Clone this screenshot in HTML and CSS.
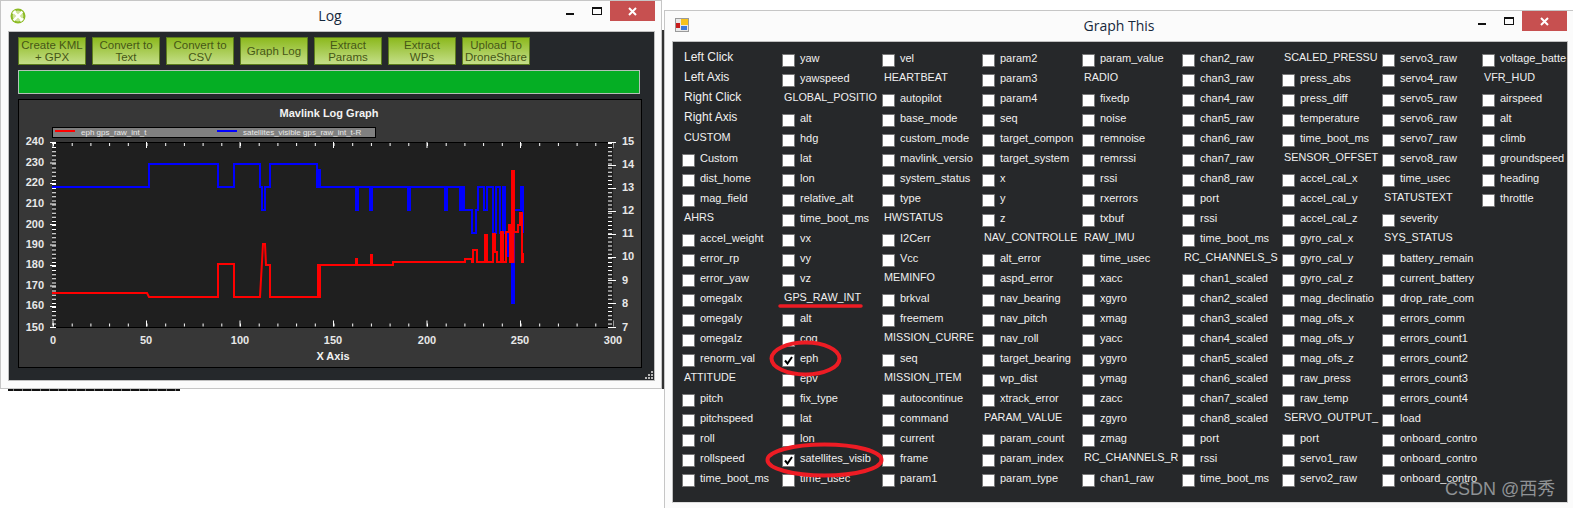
FILE: index.html
```html
<!DOCTYPE html>
<html lang="en">
<head>
<meta charset="utf-8">
<title>Log and Graph This</title>
<link rel="stylesheet" href="styles.css">
</head>
<body>
<div class="desk">
  <div class="behind-bottom"></div>
  <div class="behind-side"></div>

  <section class="window log-window">
    <header class="titlebar">
      <svg class="app-icon-log" viewBox="0 0 16 16" width="16" height="16" aria-hidden="true">
        <circle cx="8" cy="8" r="7.5" fill="#8cbb24"/>
        <circle cx="8" cy="8" r="5.4" fill="#cfe39c"/>
        <path d="M3.6 3.6 12.4 12.4M12.4 3.6 3.6 12.4" stroke="#fff" stroke-width="2.2"/>
        <path d="M2.6 5.6 5.6 2.6M10.4 13.4 13.4 10.4" stroke="#fff" stroke-width="1.6"/>
      </svg>
      <h1 class="title">Log</h1>
      <div class="controls">
        <span class="ctl-min"></span>
        <span class="ctl-max"></span>
        <span class="ctl-close"><svg viewBox="0 0 9 9" width="9" height="9" aria-hidden="true"><path d="M1 1 8 8M8 1 1 8" stroke="#fff" stroke-width="2"/></svg></span>
      </div>
    </header>
    <div class="log-body">
      <div class="btn-row">
        <button class="btn">Create KML<br>+ GPX</button>
        <button class="btn">Convert to<br>Text</button>
        <button class="btn">Convert to<br>CSV</button>
        <button class="btn">Graph Log</button>
        <button class="btn">Extract<br>Params</button>
        <button class="btn">Extract<br>WPs</button>
        <button class="btn">Upload To<br>DroneShare</button>
      </div>
      <div class="progress"></div>
      <div class="chart">
        <svg class="chart-svg" viewBox="18 99 624 269" width="624" height="269" role="img" aria-label="Mavlink Log Graph">
          <rect x="52" y="142" width="561" height="185" fill="#1f1f1f"/>
          <text class="chart-title" x="329" y="117">Mavlink Log Graph</text>

          <rect x="52.5" y="127.5" width="323" height="10" fill="#808080" stroke="#000"/>
          <line x1="55" y1="131" x2="75" y2="131" stroke="#f00" stroke-width="2"/>
          <line x1="217" y1="131" x2="237" y2="131" stroke="#00f" stroke-width="2"/>
          <text class="legend" x="81" y="134.5">eph gps_raw_int_t</text>
          <text class="legend" x="243" y="134.5">satellites_visible gps_raw_int_t-R</text>

          <path class="line" stroke="#00f" d="M52 187H149V164H218V187H234V164H260V187H262V210H265V187H270V164H317V187H318V170H320V187H356V210H358V187H370V210H372V187H408V210H410V187H445V210H447V187H460V210H462V187H464V210H472V233H476V210H478V187H484V210H487V187H493V233H496V187H500V233H503V187H505V233H508V256H512V303H514V210H521V187H523V233"/>
          <path class="line" stroke="#f00" d="M52 293H147L149 297H218V264H234V297H260L263 244H265L266 265H270V297H318V265H319V297H320V265H356V259H357V265H371V255H372V265H393V262H465V259H472V262H473V250H477V262H485V235H487V262H493V234H495V252H497V262H501V232H503V262H506V232H509V225H510V262H512V171H514V232H518V225H520V213H522V262H523V253"/>
          <line x1="513" y1="171" x2="513" y2="263" stroke="#f00" stroke-width="3"/>

          <line x1="52" y1="142.5" x2="613" y2="142.5" stroke="#000"/>
          <line x1="52" y1="327.5" x2="613" y2="327.5" stroke="#000"/>

          <line class="dots" x1="54" y1="143" x2="54" y2="327"/>
          <line class="dots" x1="610" y1="143" x2="610" y2="327"/>
          <line class="minor" x1="53" y1="144.5" x2="613" y2="144.5"/>
          <line class="minor" x1="53" y1="325" x2="613" y2="325"/>
          <line class="major" x1="52.5" y1="145" x2="614" y2="145"/>
          <line class="major" x1="52.5" y1="323.5" x2="614" y2="323.5"/>
          <path class="ticks" d="M50 142.5H56M50 163H56M50 183.5H56M50 204H56M50 224.500H56M50 245H56M50 265.500H56M50 286H56M50 306.500H56M50 327.500H56M608 142.500H616M608 165.500H616M608 188.500H616M608 211.500H616M608 234.500H616M608 257.500H616M608 280.500H616M608 303.500H616M608 327.500H616"/>

          <g class="axis-left">
            <text x="44" y="145">240</text><text x="44" y="166">230</text><text x="44" y="186">220</text>
            <text x="44" y="207">210</text><text x="44" y="228">200</text><text x="44" y="248">190</text>
            <text x="44" y="268">180</text><text x="44" y="289">170</text><text x="44" y="309">160</text>
            <text x="44" y="331">150</text>
          </g>
          <g class="axis-right">
            <text x="622" y="145">15</text><text x="622" y="168">14</text><text x="622" y="191">13</text>
            <text x="622" y="214">12</text><text x="622" y="237">11</text><text x="622" y="260">10</text>
            <text x="622" y="284">9</text><text x="622" y="307">8</text><text x="622" y="331">7</text>
          </g>
          <g class="axis-bottom">
            <text x="53" y="344">0</text><text x="146" y="344">50</text><text x="240" y="344">100</text>
            <text x="333" y="344">150</text><text x="427" y="344">200</text><text x="520" y="344">250</text>
            <text x="613" y="344">300</text>
          </g>
          <text class="axis-name" x="333" y="360">X Axis</text>
        </svg>
      </div>
      <svg class="grip" viewBox="0 0 8 8" width="8" height="8" aria-hidden="true">
        <path d="M6 0h2v2H6zM3 3h2v2H3zM6 3h2v2H6zM0 6h2v2H0zM3 6h2v2H3zM6 6h2v2H6z" fill="#b8b8b8"/>
      </svg>
    </div>
  </section>

  <section class="window graph-window">
    <header class="titlebar graph-bar">
      <svg class="app-icon-graph" viewBox="0 0 14 14" width="14" height="14" aria-hidden="true">
        <rect x="0.500" y="0.500" width="13" height="13" fill="#e8e8e8" stroke="#9a9a9a"/>
        <rect x="1" y="5" width="4" height="5" fill="#c81c1c"/>
        <rect x="6" y="1" width="7" height="6" fill="#f6c21c"/>
        <rect x="6" y="8" width="6" height="4" fill="#3d78d8"/>
      </svg>
      <h1 class="title">Graph This</h1>
      <div class="controls">
        <span class="ctl-min"></span>
        <span class="ctl-max"></span>
        <span class="ctl-close"><svg viewBox="0 0 9 9" width="9" height="9" aria-hidden="true"><path d="M1 1 8 8M8 1 1 8" stroke="#fff" stroke-width="2"/></svg></span>
      </div>
    </header>
    <div class="graph-body">
      <div class="field-grid">
        <div class="head plain">Left Click</div>
        <div class="head plain">Left Axis</div>
        <div class="head plain">Right Click</div>
        <div class="head plain">Right Axis</div>
        <div class="head">CUSTOM</div>
        <div class="item"><span class="box"></span>Custom</div>
        <div class="item"><span class="box"></span>dist_home</div>
        <div class="item"><span class="box"></span>mag_field</div>
        <div class="head">AHRS</div>
        <div class="item"><span class="box"></span>accel_weight</div>
        <div class="item"><span class="box"></span>error_rp</div>
        <div class="item"><span class="box"></span>error_yaw</div>
        <div class="item"><span class="box"></span>omegaIx</div>
        <div class="item"><span class="box"></span>omegaIy</div>
        <div class="item"><span class="box"></span>omegaIz</div>
        <div class="item"><span class="box"></span>renorm_val</div>
        <div class="head">ATTITUDE</div>
        <div class="item"><span class="box"></span>pitch</div>
        <div class="item"><span class="box"></span>pitchspeed</div>
        <div class="item"><span class="box"></span>roll</div>
        <div class="item"><span class="box"></span>rollspeed</div>
        <div class="item"><span class="box"></span>time_boot_ms</div>

        <div class="item"><span class="box"></span>yaw</div>
        <div class="item"><span class="box"></span>yawspeed</div>
        <div class="head">GLOBAL_POSITIO</div>
        <div class="item"><span class="box"></span>alt</div>
        <div class="item"><span class="box"></span>hdg</div>
        <div class="item"><span class="box"></span>lat</div>
        <div class="item"><span class="box"></span>lon</div>
        <div class="item"><span class="box"></span>relative_alt</div>
        <div class="item"><span class="box"></span>time_boot_ms</div>
        <div class="item"><span class="box"></span>vx</div>
        <div class="item"><span class="box"></span>vy</div>
        <div class="item"><span class="box"></span>vz</div>
        <div class="head">GPS_RAW_INT</div>
        <div class="item"><span class="box"></span>alt</div>
        <div class="item"><span class="box"></span>cog</div>
        <div class="item"><span class="box"><svg class="tick" viewBox="0 0 9 9" width="9" height="9" aria-hidden="true"><path d="M1 4.500 3.500 7.500 8 1" fill="none" stroke="#000" stroke-width="2"/></svg></span>eph</div>
        <div class="item"><span class="box"></span>epv</div>
        <div class="item"><span class="box"></span>fix_type</div>
        <div class="item"><span class="box"></span>lat</div>
        <div class="item"><span class="box"></span>lon</div>
        <div class="item"><span class="box"><svg class="tick" viewBox="0 0 9 9" width="9" height="9" aria-hidden="true"><path d="M1 4.500 3.500 7.500 8 1" fill="none" stroke="#000" stroke-width="2"/></svg></span>satellites_visib</div>
        <div class="item"><span class="box"></span>time_usec</div>

        <div class="item"><span class="box"></span>vel</div>
        <div class="head">HEARTBEAT</div>
        <div class="item"><span class="box"></span>autopilot</div>
        <div class="item"><span class="box"></span>base_mode</div>
        <div class="item"><span class="box"></span>custom_mode</div>
        <div class="item"><span class="box"></span>mavlink_versio</div>
        <div class="item"><span class="box"></span>system_status</div>
        <div class="item"><span class="box"></span>type</div>
        <div class="head">HWSTATUS</div>
        <div class="item"><span class="box"></span>I2Cerr</div>
        <div class="item"><span class="box"></span>Vcc</div>
        <div class="head">MEMINFO</div>
        <div class="item"><span class="box"></span>brkval</div>
        <div class="item"><span class="box"></span>freemem</div>
        <div class="head">MISSION_CURRE</div>
        <div class="item"><span class="box"></span>seq</div>
        <div class="head">MISSION_ITEM</div>
        <div class="item"><span class="box"></span>autocontinue</div>
        <div class="item"><span class="box"></span>command</div>
        <div class="item"><span class="box"></span>current</div>
        <div class="item"><span class="box"></span>frame</div>
        <div class="item"><span class="box"></span>param1</div>

        <div class="item"><span class="box"></span>param2</div>
        <div class="item"><span class="box"></span>param3</div>
        <div class="item"><span class="box"></span>param4</div>
        <div class="item"><span class="box"></span>seq</div>
        <div class="item"><span class="box"></span>target_compon</div>
        <div class="item"><span class="box"></span>target_system</div>
        <div class="item"><span class="box"></span>x</div>
        <div class="item"><span class="box"></span>y</div>
        <div class="item"><span class="box"></span>z</div>
        <div class="head">NAV_CONTROLLE</div>
        <div class="item"><span class="box"></span>alt_error</div>
        <div class="item"><span class="box"></span>aspd_error</div>
        <div class="item"><span class="box"></span>nav_bearing</div>
        <div class="item"><span class="box"></span>nav_pitch</div>
        <div class="item"><span class="box"></span>nav_roll</div>
        <div class="item"><span class="box"></span>target_bearing</div>
        <div class="item"><span class="box"></span>wp_dist</div>
        <div class="item"><span class="box"></span>xtrack_error</div>
        <div class="head">PARAM_VALUE</div>
        <div class="item"><span class="box"></span>param_count</div>
        <div class="item"><span class="box"></span>param_index</div>
        <div class="item"><span class="box"></span>param_type</div>

        <div class="item"><span class="box"></span>param_value</div>
        <div class="head">RADIO</div>
        <div class="item"><span class="box"></span>fixedp</div>
        <div class="item"><span class="box"></span>noise</div>
        <div class="item"><span class="box"></span>remnoise</div>
        <div class="item"><span class="box"></span>remrssi</div>
        <div class="item"><span class="box"></span>rssi</div>
        <div class="item"><span class="box"></span>rxerrors</div>
        <div class="item"><span class="box"></span>txbuf</div>
        <div class="head">RAW_IMU</div>
        <div class="item"><span class="box"></span>time_usec</div>
        <div class="item"><span class="box"></span>xacc</div>
        <div class="item"><span class="box"></span>xgyro</div>
        <div class="item"><span class="box"></span>xmag</div>
        <div class="item"><span class="box"></span>yacc</div>
        <div class="item"><span class="box"></span>ygyro</div>
        <div class="item"><span class="box"></span>ymag</div>
        <div class="item"><span class="box"></span>zacc</div>
        <div class="item"><span class="box"></span>zgyro</div>
        <div class="item"><span class="box"></span>zmag</div>
        <div class="head">RC_CHANNELS_R</div>
        <div class="item"><span class="box"></span>chan1_raw</div>

        <div class="item"><span class="box"></span>chan2_raw</div>
        <div class="item"><span class="box"></span>chan3_raw</div>
        <div class="item"><span class="box"></span>chan4_raw</div>
        <div class="item"><span class="box"></span>chan5_raw</div>
        <div class="item"><span class="box"></span>chan6_raw</div>
        <div class="item"><span class="box"></span>chan7_raw</div>
        <div class="item"><span class="box"></span>chan8_raw</div>
        <div class="item"><span class="box"></span>port</div>
        <div class="item"><span class="box"></span>rssi</div>
        <div class="item"><span class="box"></span>time_boot_ms</div>
        <div class="head">RC_CHANNELS_S</div>
        <div class="item"><span class="box"></span>chan1_scaled</div>
        <div class="item"><span class="box"></span>chan2_scaled</div>
        <div class="item"><span class="box"></span>chan3_scaled</div>
        <div class="item"><span class="box"></span>chan4_scaled</div>
        <div class="item"><span class="box"></span>chan5_scaled</div>
        <div class="item"><span class="box"></span>chan6_scaled</div>
        <div class="item"><span class="box"></span>chan7_scaled</div>
        <div class="item"><span class="box"></span>chan8_scaled</div>
        <div class="item"><span class="box"></span>port</div>
        <div class="item"><span class="box"></span>rssi</div>
        <div class="item"><span class="box"></span>time_boot_ms</div>

        <div class="head">SCALED_PRESSU</div>
        <div class="item"><span class="box"></span>press_abs</div>
        <div class="item"><span class="box"></span>press_diff</div>
        <div class="item"><span class="box"></span>temperature</div>
        <div class="item"><span class="box"></span>time_boot_ms</div>
        <div class="head">SENSOR_OFFSET</div>
        <div class="item"><span class="box"></span>accel_cal_x</div>
        <div class="item"><span class="box"></span>accel_cal_y</div>
        <div class="item"><span class="box"></span>accel_cal_z</div>
        <div class="item"><span class="box"></span>gyro_cal_x</div>
        <div class="item"><span class="box"></span>gyro_cal_y</div>
        <div class="item"><span class="box"></span>gyro_cal_z</div>
        <div class="item"><span class="box"></span>mag_declinatio</div>
        <div class="item"><span class="box"></span>mag_ofs_x</div>
        <div class="item"><span class="box"></span>mag_ofs_y</div>
        <div class="item"><span class="box"></span>mag_ofs_z</div>
        <div class="item"><span class="box"></span>raw_press</div>
        <div class="item"><span class="box"></span>raw_temp</div>
        <div class="head">SERVO_OUTPUT_</div>
        <div class="item"><span class="box"></span>port</div>
        <div class="item"><span class="box"></span>servo1_raw</div>
        <div class="item"><span class="box"></span>servo2_raw</div>

        <div class="item"><span class="box"></span>servo3_raw</div>
        <div class="item"><span class="box"></span>servo4_raw</div>
        <div class="item"><span class="box"></span>servo5_raw</div>
        <div class="item"><span class="box"></span>servo6_raw</div>
        <div class="item"><span class="box"></span>servo7_raw</div>
        <div class="item"><span class="box"></span>servo8_raw</div>
        <div class="item"><span class="box"></span>time_usec</div>
        <div class="head">STATUSTEXT</div>
        <div class="item"><span class="box"></span>severity</div>
        <div class="head">SYS_STATUS</div>
        <div class="item"><span class="box"></span>battery_remain</div>
        <div class="item"><span class="box"></span>current_battery</div>
        <div class="item"><span class="box"></span>drop_rate_com</div>
        <div class="item"><span class="box"></span>errors_comm</div>
        <div class="item"><span class="box"></span>errors_count1</div>
        <div class="item"><span class="box"></span>errors_count2</div>
        <div class="item"><span class="box"></span>errors_count3</div>
        <div class="item"><span class="box"></span>errors_count4</div>
        <div class="item"><span class="box"></span>load</div>
        <div class="item"><span class="box"></span>onboard_contro</div>
        <div class="item"><span class="box"></span>onboard_contro</div>
        <div class="item"><span class="box"></span>onboard_contro</div>

        <div class="item"><span class="box"></span>voltage_batte</div>
        <div class="head">VFR_HUD</div>
        <div class="item"><span class="box"></span>airspeed</div>
        <div class="item"><span class="box"></span>alt</div>
        <div class="item"><span class="box"></span>climb</div>
        <div class="item"><span class="box"></span>groundspeed</div>
        <div class="item"><span class="box"></span>heading</div>
        <div class="item"><span class="box"></span>throttle</div>
      </div>
    </div>
  </section>

  <svg class="marks" viewBox="0 0 1573 508" width="1573" height="508" aria-hidden="true">
    <line x1="780" y1="306" x2="861" y2="306" stroke="#ed1c24" stroke-width="3.500" stroke-linecap="round"/>
    <ellipse cx="805.500" cy="358.500" rx="34" ry="16" fill="none" stroke="#ed1c24" stroke-width="4"/>
    <ellipse cx="824.500" cy="460" rx="57" ry="15.500" fill="none" stroke="#ed1c24" stroke-width="4"/>
  </svg>
  <div class="watermark">CSDN @西秀</div>
</div>
</body>
</html>
```

FILE: styles.css
```css
* { box-sizing: border-box; }

html, body {
  margin: 0;
  padding: 0;
  background: #fff;
}

.desk {
  position: relative;
  width: 1573px;
  height: 508px;
  overflow: hidden;
  font-family: "Liberation Sans", Arial, sans-serif;
}

.behind-bottom {
  position: absolute;
  left: 8px;
  top: 389px;
  width: 172px;
  height: 2px;
  background: repeating-linear-gradient(90deg, #111 0 5px, #777 5px 6px, #111 6px 9px);
}

.behind-side {
  position: absolute;
  left: 662px;
  top: 30px;
  width: 2px;
  height: 359px;
  background: #333;
}

.window {
  position: absolute;
  display: flex;
  flex-direction: column;
  background: #fbfbfb;
  border: 1px solid #c6c6c6;
}

.log-window {
  left: 0;
  top: 0;
  width: 662px;
  height: 389px;
}

.graph-window {
  left: 664px;
  top: 10px;
  width: 909px;
  height: 498px;
  border-right: 0;
  border-bottom: 0;
}

.titlebar {
  position: relative;
  flex: none;
  display: flex;
  align-items: center;
  justify-content: center;
  height: 30px;
}

.title {
  margin: 0;
  font-family: "Open Sans", sans-serif;
  font-size: 14px;
  font-weight: 400;
  color: #16283c;
  line-height: 30px;
}

.log-window .title {
  margin-right: 2px;
}

.app-icon-log {
  position: absolute;
  left: 9px;
  top: 7px;
}

.app-icon-graph {
  position: absolute;
  left: 10px;
  top: 7px;
}

.controls {
  position: absolute;
  top: 0;
  right: 6px;
  display: flex;
  align-items: flex-start;
}

.graph-bar .controls {
  right: 6px;
}

.ctl-min {
  width: 8px;
  height: 2px;
  margin-top: 12px;
  background: #111;
}

.ctl-max {
  width: 10px;
  height: 8px;
  margin: 6px 0 0 18px;
  border: 1px solid #111;
  border-top-width: 2px;
}

.ctl-close {
  display: flex;
  align-items: center;
  justify-content: center;
  width: 45px;
  height: 20px;
  margin-left: 8px;
  background: #c75050;
}

.log-body {
  position: relative;
  display: flex;
  flex-direction: column;
  gap: 5px;
  margin: 0 6px 7px 7px;
  padding: 5px 9px;
  height: 351px;
  background: #25282b;
  border: 1px solid #c0c0c0;
}

.btn-row {
  display: flex;
  gap: 6px;
}

.btn {
  width: 68px;
  height: 28px;
  padding: 0;
  border: 1px solid #5c7d1c;
  background: linear-gradient(#8cb91e, #c4de88);
  color: #465716;
  font-family: "Liberation Sans", Arial, sans-serif;
  font-size: 11.500px;
  line-height: 12px;
  text-align: center;
}

.progress {
  width: 622px;
  height: 24px;
  background: #05ae24;
  border: 1px solid #b5c2b8;
}

.chart {
  width: 624px;
  height: 269px;
  background: #373737;
}

.chart-svg {
  display: block;
  outline: 1px solid #000;
  outline-offset: -1px;
}

.chart-title {
  fill: #f2f2f2;
  font-size: 11px;
  font-weight: 700;
  text-anchor: middle;
}

.legend {
  fill: #e8e8e8;
  font-size: 8px;
}

.line {
  fill: none;
  stroke-width: 2;
}

.dots {
  stroke: #fff;
  stroke-width: 4;
  stroke-dasharray: 1 3.100;
}

.minor {
  stroke: #fff;
  stroke-width: 3;
  stroke-dasharray: 1 17.700;
}

.major {
  stroke: #fff;
  stroke-width: 6;
  stroke-dasharray: 1 92.500;
}

.ticks {
  stroke: #fff;
  stroke-width: 1;
  fill: none;
}

.axis-left text,
.axis-right text,
.axis-bottom text {
  fill: #e8e8e8;
  font-size: 11px;
  font-weight: 700;
}

.axis-left text {
  text-anchor: end;
}

.axis-bottom text {
  text-anchor: middle;
}

.axis-name {
  fill: #f2f2f2;
  font-size: 11px;
  font-weight: 700;
  text-anchor: middle;
}

.grip {
  position: absolute;
  right: 1px;
  bottom: 1px;
}

.graph-body {
  width: 896px;
  height: 462px;
  margin-left: 7px;
  padding: 9px 0 0 9px;
  background: #26282a;
  border: 1px solid #c0c0c0;
  border-bottom-color: #dcdcdc;
}

.field-grid {
  display: grid;
  grid-template-rows: repeat(22, 20px);
  grid-auto-flow: column;
  grid-auto-columns: 100px;
  color: #f0f0f0;
  font-size: 11px;
}

.item {
  display: flex;
  align-items: flex-start;
  line-height: 14px;
  white-space: nowrap;
  overflow: hidden;
}

.box {
  flex: none;
  display: flex;
  align-items: center;
  justify-content: center;
  width: 13px;
  height: 13px;
  margin: 3px 5px 0 0;
  background: #fff;
  border: 1px solid #777;
}

.tick {
  display: block;
}

.head {
  margin-left: 2px;
  line-height: 12px;
  font-size: 10.800px;
  white-space: nowrap;
}

.head.plain {
  font-size: 12px;
}

.marks {
  position: absolute;
  left: 0;
  top: 0;
  pointer-events: none;
}

.watermark {
  position: absolute;
  left: 1445px;
  top: 478px;
  color: #8f9295;
  font-family: "Liberation Sans", "Noto Sans CJK SC", sans-serif;
  font-size: 18px;
  line-height: 22px;
  white-space: nowrap;
}
```
